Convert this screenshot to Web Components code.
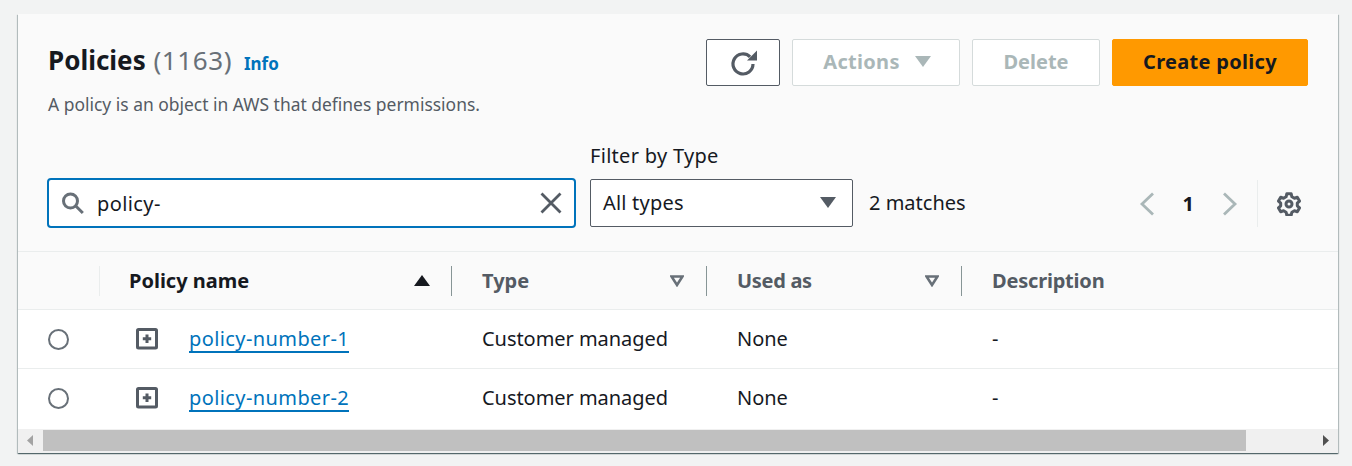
<!DOCTYPE html>
<html>
<head>
<meta charset="utf-8">
<style>
  html, body { margin: 0; height: 466px; overflow: hidden; }
  body {
    background: #f2f3f3;
    box-sizing: border-box;
    color: #16191f;
    font-family: "Noto Sans", sans-serif;
    font-size: 20px;
    padding: 14px 14px 13px 18px;
  }
</style>
</head>
<body>
<policy-card>
  <policy-header slot="header" heading="Policies" count="(1163)" description="A policy is an object in AWS that defines permissions."></policy-header>
  <policy-filter slot="header" value="policy-" type="All types" matches="2 matches"></policy-filter>
  <policy-table slot="table">
    <policy-row name="policy-number-1" type="Customer managed" used="None" description="-"></policy-row>
    <policy-row name="policy-number-2" type="Customer managed" used="None" description="-"></policy-row>
  </policy-table>
  <card-scrollbar slot="table"></card-scrollbar>
</policy-card>

<script>
// Shared icons
const ICONS = {
  refresh: `<svg width="28" height="28" viewBox="0 0 28 28" fill="none" stroke="#545b64" stroke-width="3.2"><path d="M21.1 7.9A10 10 0 1 0 24 15"/><path d="M28 1.5v10H18z" fill="#545b64" stroke="none"/></svg>`,
  search: `<svg width="24" height="24" viewBox="0 0 24 24" fill="none" stroke="#687078" stroke-width="3"><circle cx="9.5" cy="10" r="7"/><path d="M14.8 15l7 7"/></svg>`,
  close: `<svg width="24" height="24" viewBox="0 0 24 24" fill="none" stroke="#545b64" stroke-width="2.8"><path d="M2.5 2.5l19 19M21.5 2.5l-19 19"/></svg>`,
  gear: `<svg width="24" height="24" viewBox="0 0 24 24" fill="none" stroke="#545b64" stroke-width="3" stroke-linejoin="round"><circle cx="12" cy="12" r="3"/><path d="M9.8 1.8h4.4l.7 3 2.5 1.4 2.9-.9 2.2 3.8-2.2 2.1v2.6l2.2 2.1-2.2 3.8-2.9-.9-2.5 1.4-.7 3H9.8l-.7-3-2.5-1.4-2.9.9-2.2-3.8 2.2-2.1v-2.6L1.5 9.1l2.2-3.8 2.9.9 2.5-1.4z"/></svg>`,
  prev: `<svg width="16" height="24" viewBox="0 0 16 24" fill="none" stroke="#aab7b8" stroke-width="2.8"><path d="M14 1.5L3 12l11 10.5"/></svg>`,
  next: `<svg width="16" height="24" viewBox="0 0 16 24" fill="none" stroke="#aab7b8" stroke-width="2.8"><path d="M2 1.5L13 12 2 22.5"/></svg>`,
  expand: `<svg width="22" height="22" viewBox="0 0 22 22"><rect x="1.5" y="1.5" width="19" height="18.5" rx="1" fill="none" stroke="#545b64" stroke-width="3"/><path d="M11 6.5v8.5M6.8 10.75h8.4" stroke="#545b64" stroke-width="3"/></svg>`
};

function caret( color, up ) {
  const points = up ? '8,1 16,12 0,12' : '0,1 16,1 8,12';
  return `<svg width="16" height="13" viewBox="0 0 16 13"><polygon points="${points}" fill="${color}"/></svg>`;
}

function outlineCaret( color ) {
  return `<svg width="14" height="12" viewBox="0 0 14 12"><polygon points="1.5,1.5 12.5,1.5 7,10" fill="none" stroke="${color}" stroke-width="2.6"/></svg>`;
}

class PolicyCard extends HTMLElement {
  constructor() {
    super();
    this.attachShadow( {mode: 'open'} ).innerHTML = `
      <style>
        :host {
          background: #ffffff;
          box-shadow: 0 1px 1px 0 rgba(0,28,36,.45), 1px 1px 1px 0 rgba(0,28,36,.2), -1px 1px 1px 0 rgba(0,28,36,.2);
          display: block;
          height: 439px;
          width: 1320px;
        }
        .top {
          background: #fafafa;
          border-bottom: 1px solid #eaeded;
          box-sizing: border-box;
          height: 238px;
          padding: 25px 30px 0 30px;
        }
      </style>
      <div class="top"><slot name="header"></slot></div>
      <slot name="table"></slot>
    `;
  }
}

class PolicyHeader extends HTMLElement {
  constructor() {
    super();
    this.attachShadow( {mode: 'open'} ).innerHTML = `
      <style>
        :host { display: flex; justify-content: space-between; height: 100px; }
        h1 {
          font-size: 26px;
          font-weight: 700;
          line-height: 42px;
          margin: 0;
          white-space: nowrap;
        }
        h1 b { font-weight: 700; }
        h1 span { color: #687078; font-weight: 400; letter-spacing: .6px; margin-left: 1px; }
        h1 a { color: #0073bb; font-size: 17px; margin-left: 5px; }
        p {
          color: #545b64;
          font-size: 17.45px;
          line-height: 24px;
          margin: 7px 0 0 0;
          white-space: nowrap;
        }
        .actions { display: flex; gap: 12px; height: 47px; }
      </style>
      <div>
        <h1><b id="heading"></b> <span id="count"></span> <a>Info</a></h1>
        <p id="description"></p>
      </div>
      <div class="actions">
        <aws-button kind="icon" style="width:74px">${ICONS.refresh}</aws-button>
        <aws-button kind="disabled" style="width:168px;letter-spacing:.3px;padding-left:2px">Actions<span style="margin-left:15px;display:flex">${caret( '#aab7b8' )}</span></aws-button>
        <aws-button kind="disabled" style="width:128px">Delete</aws-button>
        <aws-button kind="primary" style="width:196px;letter-spacing:.3px">Create policy</aws-button>
      </div>
    `;
    const root = this.shadowRoot;
    root.getElementById( 'heading' ).textContent = this.getAttribute( 'heading' );
    root.getElementById( 'count' ).textContent = this.getAttribute( 'count' );
    root.getElementById( 'description' ).textContent = this.getAttribute( 'description' );
  }
}

class AwsButton extends HTMLElement {
  constructor() {
    super();
    this.attachShadow( {mode: 'open'} ).innerHTML = `
      <style>
        :host {
          align-items: center;
          border: 1px solid #545b64;
          border-radius: 2px;
          box-sizing: border-box;
          display: inline-flex;
          font-size: 20px;
          font-weight: 700;
          height: 47px;
          justify-content: center;
          padding-bottom: 2px;
        }
        :host( [kind="icon"] ) { background: #ffffff; padding-bottom: 0; }
        :host( [kind="disabled"] ) { background: #ffffff; border-color: #d5dbdb; color: #aab7b8; }
        :host( [kind="primary"] ) { background: #ff9900; border-color: #ff9900; color: #16191f; }
      </style>
      <slot></slot>
    `;
  }
}

class PolicyFilter extends HTMLElement {
  constructor() {
    super();
    this.attachShadow( {mode: 'open'} ).innerHTML = `
      <style>
        :host { align-items: flex-end; display: flex; height: 88px; }
        .search {
          align-items: center;
          background: #ffffff;
          border: 2px solid #0073bb;
          border-radius: 4px;
          box-sizing: border-box;
          display: flex;
          height: 50px;
          margin: 0 0 -1px -1px;
          padding: 0 11px 0 12px;
          width: 529px;
        }
        .search span { flex: 1; letter-spacing: .4px; margin-left: 12px; }
        .field { margin-left: 14px; width: 263px; }
        label { display: block; font-size: 20px; letter-spacing: .3px; line-height: 28px; margin-bottom: 9px; }
        .select {
          align-items: center;
          background: #ffffff;
          border: 1px solid #545b64;
          border-radius: 2px;
          box-sizing: border-box;
          display: flex;
          height: 48px;
          justify-content: space-between;
          letter-spacing: .2px;
          padding: 0 16px 2px 12px;
        }
        .matches { line-height: 48px; margin-left: 16px; }
        .pager {
          align-items: center;
          display: flex;
          height: 48px;
          margin-left: auto;
          margin-right: 7px;
        }
        .pager svg { margin-top: 2px; }
        .num { font-weight: 700; margin: 0 28px; }
        .gear {
          align-items: center;
          border-left: 1px solid #eaeded;
          display: flex;
          height: 47px;
          margin-left: 19px;
          padding-left: 19px;
        }
      </style>
      <div class="search">${ICONS.search}<span id="value"></span>${ICONS.close}</div>
      <div class="field">
        <label>Filter by Type</label>
        <div class="select"><span id="type"></span>${caret( '#545b64' )}</div>
      </div>
      <div class="matches" id="matches"></div>
      <div class="pager">
        ${ICONS.prev}<span class="num">1</span>${ICONS.next}
        <div class="gear">${ICONS.gear}</div>
      </div>
    `;
    const root = this.shadowRoot;
    root.getElementById( 'value' ).textContent = this.getAttribute( 'value' );
    root.getElementById( 'type' ).textContent = this.getAttribute( 'type' );
    root.getElementById( 'matches' ).textContent = this.getAttribute( 'matches' );
  }
}

const COLUMNS = '82px 352px 255px 255px 1fr';

class PolicyTable extends HTMLElement {
  constructor() {
    super();
    this.attachShadow( {mode: 'open'} ).innerHTML = `
      <style>
        :host { display: block; }
        .head {
          align-items: center;
          background: #fafafa;
          border-bottom: 1px solid #eaeded;
          box-sizing: border-box;
          display: grid;
          font-weight: 700;
          grid-template-columns: ${COLUMNS};
          height: 58px;
        }
        .cell {
          align-items: center;
          border-right: 1px solid #879596;
          box-sizing: border-box;
          color: #545b64;
          display: flex;
          height: 30px;
          justify-content: space-between;
          padding: 0 22px 0 30px;
        }
        .cell.first { border-right-color: #eaeded; padding: 0; }
        .cell.sorted { color: #16191f; padding: 0 21px 0 29px; }
        .cell.last { border: 0; letter-spacing: -.2px; }
      </style>
      <div class="head">
        <div class="cell first"></div>
        <div class="cell sorted">Policy name${caret( '#16191f', true )}</div>
        <div class="cell">Type${outlineCaret( '#687078' )}</div>
        <div class="cell" style="letter-spacing:-.3px">Used as${outlineCaret( '#687078' )}</div>
        <div class="cell last">Description</div>
      </div>
      <slot></slot>
    `;
  }
}

class PolicyRow extends HTMLElement {
  constructor() {
    super();
    this.attachShadow( {mode: 'open'} ).innerHTML = `
      <style>
        :host {
          align-items: center;
          background: #ffffff;
          border-bottom: 1px solid #eaeded;
          box-sizing: border-box;
          display: grid;
          grid-template-columns: ${COLUMNS};
          height: 59px;
        }
        :host( :last-of-type ) { border-bottom: 0; height: 60px; padding-bottom: 2px; }
        .radio {
          border: 2px solid #687078;
          border-radius: 50%;
          box-sizing: border-box;
          height: 21px;
          margin-left: 30px;
          width: 21px;
        }
        .name { align-items: center; display: flex; padding-left: 36px; }
        .name svg { display: block; }
        a {
          border-bottom: 2px solid #0073bb;
          color: #0073bb;
          letter-spacing: .4px;
          line-height: 25px;
          margin-left: 31px;
        }
        .text { letter-spacing: -.05px; padding: 0 0 2px 30px; }
      </style>
      <div class="radio"></div>
      <div class="name">${ICONS.expand}<a id="name"></a></div>
      <div class="text" id="type"></div>
      <div class="text" id="used"></div>
      <div class="text" id="description"></div>
    `;
    for( const key of ['name', 'type', 'used', 'description'] ) {
      this.shadowRoot.getElementById( key ).textContent = this.getAttribute( key );
    }
  }
}

class CardScrollbar extends HTMLElement {
  constructor() {
    super();
    this.attachShadow( {mode: 'open'} ).innerHTML = `
      <style>
        :host {
          align-items: center;
          background: #f0f0f0;
          box-sizing: border-box;
          display: flex;
          height: 24px;
          padding: 1px 9px 2px 9px;
        }
        .thumb { background: #c0c0c0; height: 21px; margin: 0 0 0 10px; width: 1203px; }
        svg { display: block; }
        .end { margin-left: auto; }
      </style>
      <svg width="6" height="11" viewBox="0 0 6 11"><polygon points="6,0 0,5.5 6,11" fill="#a3a3a3"/></svg>
      <div class="thumb"></div>
      <svg class="end" width="6" height="11" viewBox="0 0 6 11"><polygon points="0,0 6,5.5 0,11" fill="#505050"/></svg>
    `;
  }
}

window.customElements.define( 'aws-button', AwsButton );
window.customElements.define( 'policy-card', PolicyCard );
window.customElements.define( 'policy-header', PolicyHeader );
window.customElements.define( 'policy-filter', PolicyFilter );
window.customElements.define( 'policy-table', PolicyTable );
window.customElements.define( 'policy-row', PolicyRow );
window.customElements.define( 'card-scrollbar', CardScrollbar );
</script>
</body>
</html>
